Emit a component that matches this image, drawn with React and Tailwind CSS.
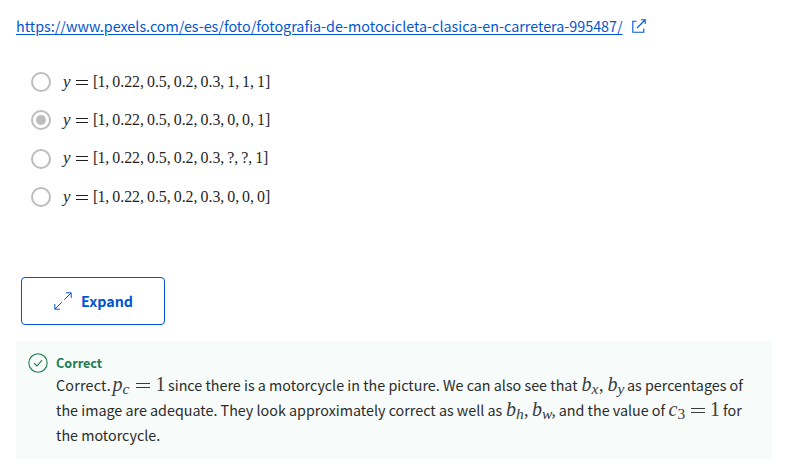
const answers = [
  ["1", "0.22", "0.5", "0.2", "0.3", "1", "1", "1"],
  ["1", "0.22", "0.5", "0.2", "0.3", "0", "0", "1"],
  ["1", "0.22", "0.5", "0.2", "0.3", "?", "?", "1"],
  ["1", "0.22", "0.5", "0.2", "0.3", "0", "0", "0"],
];

const SERIF = "font-['Liberation_Serif',serif]";

function Equals({ className }) {
  return (
    <svg className={className} viewBox="0 0 12 6" preserveAspectRatio="none" fill="none" stroke="currentColor" strokeWidth="1">
      <path d="M0 .5H12M0 4.5H12" />
    </svg>
  );
}

function Answer({ values, selected }) {
  return (
    <label className="flex h-[38.3px] items-center">
      <span className="flex size-5 items-center justify-center rounded-full border-2 border-[#bdbdbd]">
        {selected && <span className="size-2.5 rounded-full bg-[#bdbdbd]" />}
      </span>
      <span className={`-mt-px ml-[12px] flex items-center whitespace-nowrap text-[15.9px] leading-5 text-[#1f1f1f] ${SERIF}`}>
        <i className="w-[13px] text-[17px]">y</i>
        <Equals className="mr-[5px] mt-[2px] h-[6px] w-[12px]" />
        <span className="w-[4.4px]">[</span>
        {values.map((v, i) => (
          <span key={i}>
            {v}
            {i < values.length - 1 && <span className="inline-block w-[6.9px]">,</span>}
          </span>
        ))}
        <span>]</span>
      </span>
    </label>
  );
}

function Sub({ base, sub, className }) {
  return (
    <span className={`${SERIF} text-[20px] text-[#3a3a3a] ${className}`}>
      <i>{base}</i>
      <span className="relative top-[3px] text-[15.5px] italic">{sub}</span>
    </span>
  );
}

export default function App() {
  return (
    <main className="h-[466px] w-[787px] overflow-hidden bg-white pt-[14px] font-['Noto_Sans_CJK_SC',sans-serif] text-[#1f1f1f]">
      <a className="ml-4 flex h-6 items-center text-[14.34px] leading-6 text-[#0056d2]">
        <span className="w-[607px] whitespace-nowrap underline underline-offset-2">
          https://www.pexels.com/es-es/foto/fotografia-de-motocicleta-clasica-en-carretera-995487/
        </span>
        <svg className="ml-[9px] h-[14px] w-[14px]" viewBox="0 0 14 14" fill="none" stroke="currentColor" strokeWidth="1.1">
          <path d="M4.5 2.2H.8V13.2H11.8V9.5M5 9L13 1M9 .8H13.2V5" />
        </svg>
      </a>
      <section className="ml-[31px] mt-[25px] h-[154px]">
        {answers.map((values, i) => (
          <Answer key={i} values={values} selected={i === 1} />
        ))}
      </section>
      <button className="ml-[21px] mt-[60px] flex h-12 w-36 items-center rounded-[4px] border border-[#0056d2] pl-8 text-[14.3px] font-bold text-[#0056d2]">
        <svg className="size-[18px]" viewBox="0 0 18 18" fill="none" stroke="currentColor" strokeWidth="1">
          <path d="M1 17L7.8 10.2M10.2 7.8L17 1M12 .8H17.2V6M.8 12V17.2H6" />
        </svg>
        <span className="ml-[9px]">Expand</span>
      </button>
      <section className="ml-4 mt-4 flex h-[118px] w-[756px] bg-[#f7fbf9] pl-3 pt-3">
        <svg className="size-5 shrink-0 text-[#1d7c50]" viewBox="0 0 20 20" fill="none" stroke="currentColor" strokeWidth="1.1">
          <circle cx="10" cy="10" r="9.2" />
          <path d="M6 10.2L9 13L14 7.2" />
        </svg>
        <div className="ml-[8px]">
          <h2 className="h-[19px] text-[12.6px] font-bold leading-5 text-[#1d7c50]">Correct</h2>
          <div className="whitespace-nowrap text-[14.32px] leading-[25px] text-[#2b2b2b]">
            <p className="flex h-[25px] items-baseline">
              <span className="w-[56.5px] tracking-[0.2px]">Correct.</span>
              <Sub base="p" sub="c" className="w-[23px]" />
              <Equals className="mr-[6px] mt-[2px] h-[6px] w-[14px] self-center text-[#3a3a3a]" />
              <span className={`w-[12.5px] text-[20px] text-[#3a3a3a] ${SERIF}`}>1</span>
              <span className="w-[413.5px]">since there is a motorcycle in the picture. We can also see that</span>
              <Sub base="b" sub="x" className="w-[17.5px]" />
              <span className={`w-[8.5px] text-[18px] ${SERIF}`}>,</span>
              <Sub base="b" sub="y" className="w-[19.5px]" />
              <span>as percentages of</span>
            </p>
            <p className="flex h-[25px] items-baseline">
              <span className="w-[450px]">the image are adequate. They look approximately correct as well as</span>
              <Sub base="b" sub="h" className="w-[18px]" />
              <span className={`w-[8px] text-[18px] ${SERIF}`}>,</span>
              <Sub base="b" sub="w" className="w-[19.5px]" />
              <span className="w-[117px]">, and the value of</span>
              <Sub base="c" sub={<span className="not-italic">3</span>} className="w-[22px]" />
              <Equals className="mr-[5.5px] mt-[2px] h-[6px] w-[14px] self-center text-[#3a3a3a]" />
              <span className={`w-[13px] text-[20px] text-[#3a3a3a] ${SERIF}`}>1</span>
              <span>for</span>
            </p>
            <p className="h-[25px]">the motorcycle.</p>
          </div>
        </div>
      </section>
    </main>
  );
}
